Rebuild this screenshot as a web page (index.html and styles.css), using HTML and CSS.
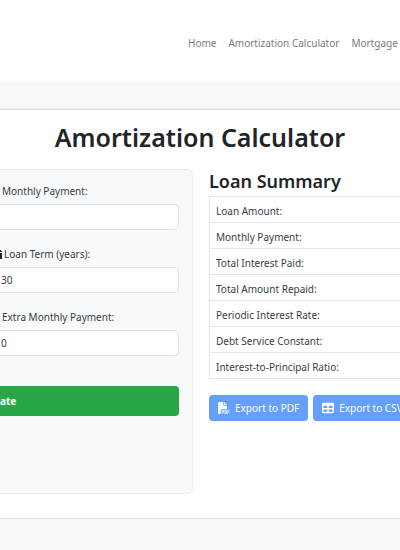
FILE: index.html
```html
<!DOCTYPE html>
<html lang="en">
<head>
  <meta charset="UTF-8" />
  <meta name="viewport" content="width=device-width, initial-scale=1" />
  <title>Amortization Calculator</title>
  <link rel="stylesheet" href="styles.css">
</head>
<body>

  <!-- Navigation -->
  <header class="site-header">
    <nav class="nav-links">
      <a href="#">Home</a>
      <a href="#">Amortization Calculator</a>
      <a href="#">Mortgage</a>
    </nav>
  </header>

  <main class="calculator">
    <h1>Amortization Calculator</h1>

    <div class="columns">
      <!-- Loan inputs -->
      <form class="loan-form">
        <div class="field">
          <label for="payment">Monthly Payment:</label>
          <input type="text" id="payment">
        </div>
        <div class="field">
          <label for="term" class="with-icon">
            <svg class="term-icon" viewBox="0 0 2 9" aria-hidden="true"><path d="M0 0h1v1h1v1H0zM0 3h2v6H0z" /></svg>
            Loan Term (years):
          </label>
          <input type="text" id="term" value="30">
        </div>
        <div class="field">
          <label for="extra">Extra Monthly Payment:</label>
          <input type="text" id="extra" value="0">
        </div>
        <button type="button" class="calculate">ate</button>
      </form>

      <!-- Results -->
      <section class="summary">
        <h2>Loan Summary</h2>
        <table>
          <tbody>
            <tr><th scope="row">Loan Amount:</th></tr>
            <tr><th scope="row">Monthly Payment:</th></tr>
            <tr><th scope="row">Total Interest Paid:</th></tr>
            <tr><th scope="row">Total Amount Repaid:</th></tr>
            <tr><th scope="row">Periodic Interest Rate:</th></tr>
            <tr><th scope="row">Debt Service Constant:</th></tr>
            <tr><th scope="row">Interest-to-Principal Ratio:</th></tr>
          </tbody>
        </table>
        <div class="exports">
          <button type="button" class="export">
            <svg viewBox="0 0 512 512" aria-hidden="true"><path d="M0 64C0 29 29 0 64 0h160v128c0 18 14 32 32 32h128v144H176c-35 0-64 29-64 64v144H64c-35 0-64-29-64-64zM384 128H256V0z" /><path fill-rule="evenodd" d="M160 352h48c30 0 52 23 52 52s-22 52-52 52h-18v56h-30zm30 30v44h18c28 0 28-44 0-44zM280 352h40c32 0 54 22 54 54v52c0 32-22 54-54 54h-40zm30 30v100h10c16 0 24-8 24-24v-52c0-16-8-24-24-24zM400 352h96v30h-66v36h58v30h-58v64h-30z" /></svg>
            Export to PDF
          </button>
          <button type="button" class="export">
            <svg viewBox="0 0 512 512" aria-hidden="true"><path fill-rule="evenodd" d="M64 32h384c35 0 64 29 64 64v320c0 35-29 64-64 64H64c-35 0-64-29-64-64V96c0-35 29-64 64-64zm0 128v96h160v-96zm224 0v96h160v-96zM64 320v96h160v-96zm224 0v96h160v-96z" /></svg>
            Export to CSV
          </button>
        </div>
      </section>
    </div>
  </main>

</body>
</html>
```

FILE: styles.css
```css
* {
  box-sizing: border-box;
}

body {
  margin: 0;
  background-color: #f7f9fb;
  color: #212529;
  font-family: "Noto Sans", "Open Sans", sans-serif;
  font-size: 10px;
  line-height: 16px;
  overflow-x: hidden;
}

/* Navigation */
.site-header {
  background-color: white;
  border-bottom: 1px solid #eff1f3;
  padding: 35px 0 32px 47%;
}

.nav-links {
  display: flex;
  gap: 12px;
}

.nav-links a {
  color: #7b7b7b;
  text-decoration: none;
  white-space: nowrap;
}

/* Main card */
.calculator {
  margin-top: 25px;
  padding: 9px 0 24px;
  background-color: white;
  border-top: 1px solid #dfe2e6;
  border-bottom: 1px solid #dcdee0;
  box-shadow: 0 2px 5px 1px rgba(0, 0, 0, 0.18);
}

h1 {
  margin: 0 0 14px;
  font-size: 25px;
  line-height: 36px;
  font-weight: 600;
  text-align: center;
}

.columns {
  display: grid;
  grid-template-columns: 193fr 191fr;
  gap: 16px;
}

/* Loan inputs */
.loan-form {
  padding: 13px 13px 77px 0;
  background-color: #f7f9fb;
  border: 1px solid #e9ecef;
  border-left: none;
  border-radius: 0 6px 6px 0;
}

.field {
  margin-bottom: 16px;
}

.field label {
  display: block;
  margin-bottom: 5px;
  padding-left: 2px;
  color: #383d42;
}

.field .with-icon {
  display: flex;
  align-items: center;
  gap: 2px;
  padding-left: 0;
}

.term-icon {
  width: 2px;
  height: 9px;
  fill: #212529;
}

.field input {
  display: block;
  width: 100%;
  height: 26px;
  padding: 0 1px;
  border: 1px solid #dee2e6;
  border-left: none;
  border-radius: 0 5px 5px 0;
  background-color: white;
  color: #383d42;
  font: inherit;
}

.calculate {
  display: block;
  width: 100%;
  height: 30px;
  margin-top: 30px;
  padding: 0;
  border: none;
  border-radius: 0 4px 4px 0;
  background-color: #28a745;
  color: white;
  font: inherit;
  font-weight: bold;
  text-align: left;
}

/* Results */
.summary {
  min-width: 0;
}

h2 {
  margin: 0 0 3px;
  font-size: 18px;
  line-height: 24px;
  font-weight: 600;
}

table {
  width: 100%;
  border-collapse: collapse;
}

th {
  height: 26px;
  padding: 2px 0 0 6px;
  border: 1px solid #e3e6e9;
  border-right: none;
  color: #383d42;
  font-weight: normal;
  text-align: left;
}

.exports {
  display: flex;
  gap: 5px;
  margin-top: 16px;
}

.export {
  display: flex;
  flex-shrink: 0;
  align-items: center;
  gap: 5px;
  height: 26px;
  padding: 0 9px;
  border: none;
  border-radius: 4px;
  background-color: #649eff;
  color: white;
  font: inherit;
  white-space: nowrap;
}

.export svg {
  width: 12px;
  height: 12px;
  fill: currentColor;
}
```
